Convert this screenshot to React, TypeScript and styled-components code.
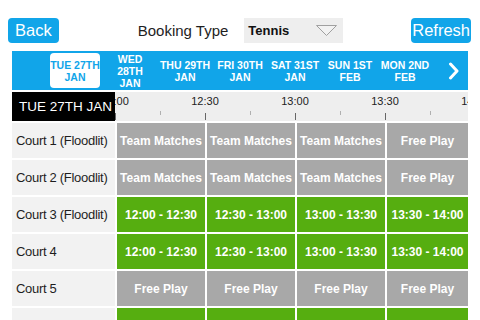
import React from 'react'
import styled, { createGlobalStyle } from 'styled-components'

const GlobalStyle = createGlobalStyle`
  html, body {
    margin: 0;
    padding: 0;
    height: 320px;
    overflow: hidden;
    background: #ffffff;
    font-family: 'Liberation Sans', Arial, sans-serif;
  }
`

const BLUE = '#11a5e9'
const GREEN = '#56ae10'
const GREY = '#a8a8a8'

const Page = styled.div`
  width: 480px;
  height: 320px;
  overflow: hidden;
`

const Header = styled.div`
  display: flex;
  align-items: center;
  padding: 18px 9px 0 8px;
  height: 25px;
`

const NavButton = styled.button<{ $pad: number }>`
  height: 25px;
  padding: 0 ${({ $pad }) => $pad}px;
  border: none;
  border-radius: 4px;
  background: ${BLUE};
  color: #ffffff;
  font-family: 'Liberation Sans', Arial, sans-serif;
  font-size: 16.5px;
  line-height: 25px;
`

const Title = styled.div`
  margin-left: 79px;
  font-size: 15px;
  color: #1e1e1e;
`

const Dropdown = styled.div`
  display: flex;
  align-items: center;
  justify-content: space-between;
  width: 99px;
  height: 25px;
  margin-left: 16px;
  padding: 0 6px 0 4px;
  box-sizing: border-box;
  background: #eeeeee;
  font-size: 13px;
  font-weight: bold;
  color: #111111;
`

const Spacer = styled.div`
  flex: 1;
`

const DateBar = styled.div`
  display: flex;
  align-items: center;
  gap: 5px;
  margin: 8px 12px 0;
  height: 39px;
  padding-left: 38px;
  background: ${BLUE};
`

const DateItem = styled.div<{ $active?: boolean }>`
  width: 50px;
  height: 35px;
  flex: none;
  display: flex;
  flex-direction: column;
  align-items: center;
  justify-content: center;
  border-radius: 4px;
  background: ${({ $active }) => ($active ? '#ffffff' : 'transparent')};
  color: ${({ $active }) => ($active ? BLUE : '#ffffff')};
  font-size: 10.5px;
  font-weight: bold;
  line-height: 12px;
  white-space: nowrap;
`

const NextArrow = styled.div`
  margin-left: auto;
  margin-right: 8px;
  display: flex;
`

const Ruler = styled.div`
  display: flex;
  height: 29px;
  margin: 2px 12px 0;
  background: #eeeeee;
  overflow: hidden;
`

// black day box sits over the start of the time track
const DayLabel = styled.div`
  position: relative;
  z-index: 1;
  flex: none;
  width: 103px;
  display: flex;
  align-items: center;
  padding-left: 7px;
  box-sizing: border-box;
  background: #000000;
  color: #ffffff;
  font-size: 13.5px;
  white-space: nowrap;
`

const Track = styled.div`
  display: flex;
  margin-left: -45px;
`

const TimeSlot = styled.div`
  flex: none;
  width: 90px;
  padding-top: 3px;
  text-align: center;
  font-size: 11px;
  color: #222222;
  background:
    linear-gradient(#b0b0b0, #b0b0b0) no-repeat 0 19px / 1px 4px,
    linear-gradient(#666666, #666666) no-repeat 45px 21px / 1px 7px;
`

const Grid = styled.div`
  display: grid;
  grid-template-columns: 103px repeat(3, 88px) 1fr;
  grid-auto-rows: 35px;
  gap: 2px;
  margin: 2px 12px 0;
`

const CourtName = styled.div`
  display: flex;
  align-items: center;
  padding-left: 4px;
  background: #f2f2f2;
  color: #1e1e1e;
  font-size: 13px;
  letter-spacing: -0.3px;
  white-space: nowrap;
`

type Kind = 'team' | 'free' | 'open'

const Cell = styled.div<{ $kind: Kind }>`
  display: flex;
  align-items: center;
  justify-content: center;
  background: ${({ $kind }) => ($kind === 'open' ? GREEN : GREY)};
  color: #ffffff;
  font-size: 12px;
  font-weight: bold;
  white-space: nowrap;
  overflow: hidden;
`

const dates = [
  { lines: ['TUE 27TH', 'JAN'], active: true },
  { lines: ['WED', '28TH', 'JAN'] },
  { lines: ['THU 29TH', 'JAN'] },
  { lines: ['FRI 30TH', 'JAN'] },
  { lines: ['SAT 31ST', 'JAN'] },
  { lines: ['SUN 1ST', 'FEB'] },
  { lines: ['MON 2ND', 'FEB'] },
]

const times = ['12:00', '12:30', '13:00', '13:30', '14:00']
const ranges = ['12:00 - 12:30', '12:30 - 13:00', '13:00 - 13:30', '13:30 - 14:00']

type Slot = { kind: Kind; text: string }

const team = (): Slot[] => [
  { kind: 'team', text: 'Team Matches' },
  { kind: 'team', text: 'Team Matches' },
  { kind: 'team', text: 'Team Matches' },
  { kind: 'free', text: 'Free Play' },
]
const open = (): Slot[] => ranges.map((r) => ({ kind: 'open', text: r }))
const free = (): Slot[] => ranges.map(() => ({ kind: 'free', text: 'Free Play' }))
// next row only peeks in at the bottom edge, its text is out of view
const peek = (): Slot[] => ranges.map(() => ({ kind: 'open', text: '' }))

const courts = [
  { id: 'c1', name: 'Court 1 (Floodlit)', slots: team() },
  { id: 'c2', name: 'Court 2 (Floodlit)', slots: team() },
  { id: 'c3', name: 'Court 3 (Floodlit)', slots: open() },
  { id: 'c4', name: 'Court 4', slots: open() },
  { id: 'c5', name: 'Court 5', slots: free() },
  { id: 'c6', name: '', slots: peek() },
]

const App = () => {
  return (
    <Page>
      <GlobalStyle />
      <Header>
        <NavButton $pad={7}>Back</NavButton>
        <Title>Booking Type</Title>
        <Dropdown>
          Tennis
          <svg width="21" height="11" viewBox="0 0 21 11">
            <polygon points="0.5,0.5 20.5,0.5 10.5,10.5" fill="#f2f2f2" stroke="#a0a0a0" strokeWidth="1" />
          </svg>
        </Dropdown>
        <Spacer />
        <NavButton $pad={1}>Refresh</NavButton>
      </Header>

      <DateBar>
        {dates.map((d) => (
          <DateItem key={d.lines.join(' ')} $active={d.active}>
            {d.lines.map((l) => (
              <span key={l}>{l}</span>
            ))}
          </DateItem>
        ))}
        <NextArrow>
          <svg width="12" height="18" viewBox="0 0 12 18">
            <polyline points="2.5,2 9,9 2.5,16" fill="none" stroke="#ffffff" strokeWidth="3" strokeLinecap="round" strokeLinejoin="round" />
          </svg>
        </NextArrow>
      </DateBar>

      <Ruler>
        <DayLabel>TUE 27TH JAN</DayLabel>
        <Track>
          {times.map((t) => (
            <TimeSlot key={t}>{t}</TimeSlot>
          ))}
        </Track>
      </Ruler>

      <Grid>
        {courts.map((c) => (
          <React.Fragment key={c.id}>
            <CourtName>{c.name}</CourtName>
            {c.slots.map((s, i) => (
              <Cell key={i} $kind={s.kind}>
                {s.text}
              </Cell>
            ))}
          </React.Fragment>
        ))}
      </Grid>
    </Page>
  )
}

export default App
